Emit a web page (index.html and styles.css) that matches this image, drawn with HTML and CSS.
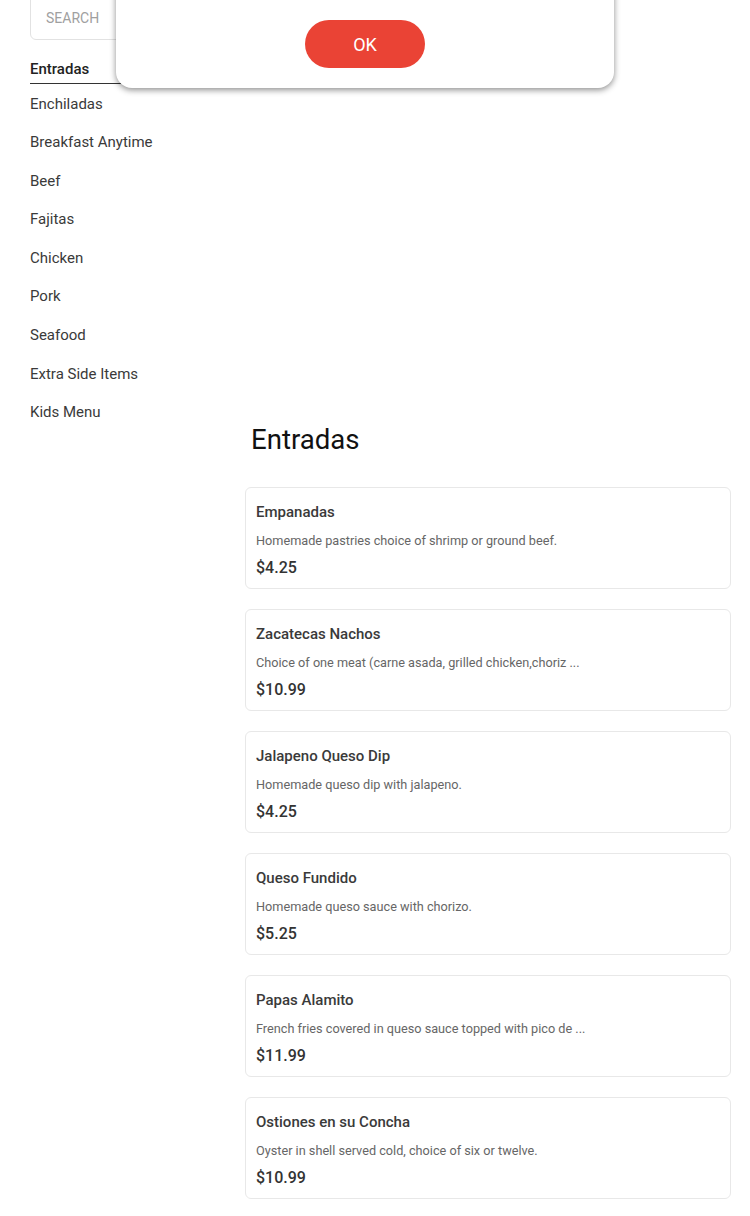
FILE: index.html
```html
<!DOCTYPE html>
<html>
<head>
<meta charset="utf-8">
<link rel="stylesheet" href="styles.css">
</head>
<body>
<div class="page">
  <aside class="sidebar">
    <div class="search">SEARCH</div>
    <ul class="cats">
      <li class="cat active">Entradas</li>
      <li class="cat">Enchiladas</li>
      <li class="cat">Breakfast Anytime</li>
      <li class="cat">Beef</li>
      <li class="cat">Fajitas</li>
      <li class="cat">Chicken</li>
      <li class="cat">Pork</li>
      <li class="cat">Seafood</li>
      <li class="cat">Extra Side Items</li>
      <li class="cat">Kids Menu</li>
    </ul>
  </aside>
  <main class="menu">
    <h2 class="section-title">Entradas</h2>
    <div class="cards">
      <div class="card">
        <div class="item-name">Empanadas</div>
        <div class="item-desc">Homemade pastries choice of shrimp or ground beef.</div>
        <div class="item-price">$4.25</div>
      </div>
      <div class="card">
        <div class="item-name">Zacatecas Nachos</div>
        <div class="item-desc">Choice of one meat (carne asada, grilled chicken,choriz ...</div>
        <div class="item-price">$10.99</div>
      </div>
      <div class="card">
        <div class="item-name">Jalapeno Queso Dip</div>
        <div class="item-desc">Homemade queso dip with jalapeno.</div>
        <div class="item-price">$4.25</div>
      </div>
      <div class="card">
        <div class="item-name">Queso Fundido</div>
        <div class="item-desc">Homemade queso sauce with chorizo.</div>
        <div class="item-price">$5.25</div>
      </div>
      <div class="card">
        <div class="item-name">Papas Alamito</div>
        <div class="item-desc">French fries covered in queso sauce topped with pico de ...</div>
        <div class="item-price">$11.99</div>
      </div>
      <div class="card">
        <div class="item-name">Ostiones en su Concha</div>
        <div class="item-desc">Oyster in shell served cold, choice of six or twelve.</div>
        <div class="item-price">$10.99</div>
      </div>
    </div>
  </main>
</div>
<div class="modal">
  <button class="ok-btn">OK</button>
</div>
</body>
</html>
```
FILE: styles.css
```css
* { box-sizing: border-box; }
html, body { margin: 0; padding: 0; background: #fff; }
body {
  font-family: Roboto, "Liberation Sans", Arial, sans-serif;
  color: #333;
  overflow: hidden;
}
.page {
  display: grid;
  grid-template-columns: 215px 486px;
  padding-left: 30px;
  margin-top: -10px;
}
.sidebar { display: flex; flex-direction: column; }
.search {
  height: 50px;
  width: 185px;
  border: 1px solid #e2e2e2;
  border-radius: 6px;
  padding: 17px 0 0 15px;
  font-size: 14px;
  line-height: 20px;
  color: #a0a0a0;
  margin-bottom: 16px;
}
.cats { list-style: none; margin: 0; padding: 0; }
.cat {
  font-size: 15px;
  height: 38.6px;
  line-height: 38.6px;
  color: #3a3a3a;
}
.cat.active {
  height: 28px;
  line-height: 26px;
  font-weight: 500;
  color: #222;
  border-bottom: 1px solid #333;
  width: 120px;
  margin-bottom: 0.5px;
}
.menu { padding-top: 433px; }
.section-title {
  margin: 0 0 30px 6px;
  font-size: 27.6px;
  line-height: 34px;
  font-weight: 400;
  color: #111;
}
.cards { display: flex; flex-direction: column; gap: 20px; }
.card {
  border: 1px solid #e8e8e8;
  border-radius: 6px;
  padding: 14px 10px 11px;
  height: 102px;
}
.item-name {
  font-size: 15px;
  line-height: 20px;
  font-weight: 500;
  color: #3a3a3a;
}
.item-desc {
  margin-top: 10px;
  font-size: 12.7px;
  line-height: 18px;
  color: #666;
}
.item-price {
  margin-top: 8px;
  font-size: 16px;
  line-height: 20px;
  font-weight: 500;
  color: #333;
}
.modal {
  position: fixed;
  left: 116px;
  top: -60px;
  width: 498px;
  height: 148px;
  background: #fff;
  border-radius: 16px;
  box-shadow: 0 2px 6px rgba(0,0,0,0.45);
  display: flex;
  justify-content: center;
  align-items: flex-end;
  padding-bottom: 20px;
}
.ok-btn {
  width: 120px;
  height: 48px;
  border: none;
  border-radius: 24px;
  background: #ea4335;
  color: #fff;
  font-family: Roboto, "Liberation Sans", Arial, sans-serif;
  font-size: 18px;
  cursor: pointer;
}
```
